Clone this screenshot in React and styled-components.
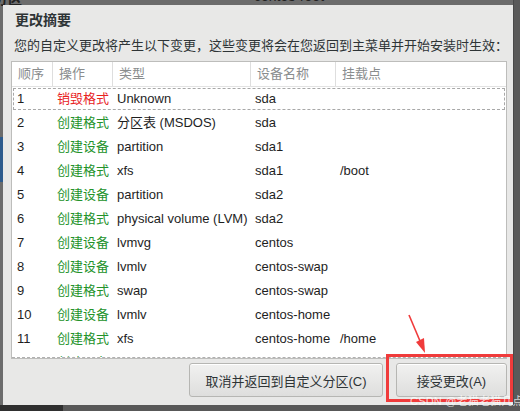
import React from 'react';
import styled, { createGlobalStyle } from 'styled-components';

const GlobalStyle = createGlobalStyle`
  html, body {
    margin: 0;
    padding: 0;
    background: #6c6c6c;
  }
  body {
    font-family: "Liberation Sans", "Noto Sans CJK SC", sans-serif;
  }
`;

const Desktop = styled.div`
  position: relative;
  width: 520px;
  height: 411px;
  overflow: hidden;
  background: #6c6c6c;
  box-sizing: border-box;
  padding: 5px 7px 0 3px;
`;

const BackText = styled.span`
  position: absolute;
  left: ${p => p.x}px;
  top: ${p => p.y}px;
  font-size: 14px;
  font-weight: ${p => (p.bold ? 700 : 400)};
  color: #222;
  white-space: nowrap;
`;

const SideAccent = styled.div`
  position: absolute;
  left: 0;
  top: 137px;
  width: 3px;
  height: 45px;
  background: #2d5b8d;
`;

const RightEdge = styled.div`
  position: absolute;
  right: 0;
  top: 0;
  width: 7px;
  height: 405px;
  background: #5a5a5a;
  border-left: 1px solid #4a4a4a;
  box-sizing: border-box;
`;

const BottomBar = styled.div`
  position: absolute;
  left: 0;
  bottom: 0;
  width: 100%;
  height: 6px;
  display: flex;
`;

const BarPart = styled.div`
  width: ${p => p.w};
  flex: ${p => (p.grow ? 1 : 'none')};
  background: ${p => p.color};
`;

const Dialog = styled.div`
  position: relative;
  width: 510px;
  height: 400px;
  box-sizing: border-box;
  background: #e8e8e7;
  padding: 6px 6px 8px 8px;
  display: flex;
  flex-direction: column;
  color: #2e3436;
`;

const Title = styled.div`
  font-size: 14px;
  font-weight: 700;
  line-height: 18px;
  padding-left: 4px;
`;

const Subtitle = styled.div`
  margin-top: 8px;
  font-size: 13px;
  line-height: 18px;
  padding-left: 3px;
  white-space: nowrap;
`;

const Table = styled.div`
  margin-top: 6px;
  height: 299px;
  background: #fff;
  border: 1px solid #bdbdbb;
  box-sizing: border-box;
  display: flex;
  flex-direction: column;
  overflow: hidden;
`;

const cols = '40px 60px 138px 85px 1fr';

const HeaderRow = styled.div`
  display: grid;
  grid-template-columns: ${cols};
  height: 24px;
  border-bottom: 1px solid #e2e2e2;
  flex: none;
`;

const HeaderCell = styled.div`
  font-size: 13px;
  line-height: 24px;
  color: #8a8d8e;
  padding-left: 6px;
  border-left: ${p => (p.first ? 'none' : '1px solid #dedede')};
`;

const Body = styled.div`
  flex: 1;
  overflow: hidden;
  border-bottom: 1px dashed #b0b0b0;
`;

const Row = styled.div`
  display: grid;
  grid-template-columns: ${cols};
  height: 24px;
  outline: ${p => (p.focused ? '1px dashed #a8a8a8' : 'none')};
  outline-offset: -2px;
`;

const Cell = styled.div`
  font-size: 13px;
  line-height: 24px;
  padding-left: 5px;
  white-space: nowrap;
  color: ${p => p.color || '#1e1e1e'};
`;

const Footer = styled.div`
  margin-top: 4px;
  display: flex;
  justify-content: flex-end;
  gap: 13px;
  padding-right: 0;
`;

const Button = styled.button`
  height: 34px;
  width: ${p => p.w}px;
  box-sizing: border-box;
  border: 1px solid #b6b6b3;
  border-radius: 3px;
  background: linear-gradient(#f1f1f0, #dededd);
  box-shadow: inset 0 1px #fff;
  font-family: "Liberation Sans", "Noto Sans CJK SC", sans-serif;
  font-size: 13px;
  color: #2e3436;
  padding: 0;
`;

const Highlight = styled.div`
  position: absolute;
  left: 383px;
  top: 349px;
  width: 127px;
  height: 48px;
  border: 3px solid #f03b3b;
  box-sizing: border-box;
  pointer-events: none;
`;

const Watermark = styled.span`
  position: absolute;
  left: 407px;
  top: 387px;
  font-size: 11px;
  color: rgba(255, 255, 255, 0.75);
  white-space: nowrap;
  letter-spacing: 0.2px;
`;

const Arrow = styled.svg`
  position: absolute;
  left: 400px;
  top: 310px;
  overflow: visible;
`;

const RED = '#e8231f';
const GREEN = '#23922a';

const rows = [
  ['1', '销毁格式', 'Unknown', 'sda', ''],
  ['2', '创建格式', '分区表 (MSDOS)', 'sda', ''],
  ['3', '创建设备', 'partition', 'sda1', ''],
  ['4', '创建格式', 'xfs', 'sda1', '/boot'],
  ['5', '创建设备', 'partition', 'sda2', ''],
  ['6', '创建格式', 'physical volume (LVM)', 'sda2', ''],
  ['7', '创建设备', 'lvmvg', 'centos', ''],
  ['8', '创建设备', 'lvmlv', 'centos-swap', ''],
  ['9', '创建格式', 'swap', 'centos-swap', ''],
  ['10', '创建设备', 'lvmlv', 'centos-home', ''],
  ['11', '创建格式', 'xfs', 'centos-home', '/home'],
  ['12', '创建设备', 'lvmlv', 'centos-root', ''],
];

const headers = ['顺序', '操作', '类型', '设备名称', '挂载点'];

export default function App() {
  return (
    <>
      <GlobalStyle />
      <Desktop>
        <BackText x={-6} y={-12} bold>分区</BackText>
        <BackText x={254} y={-12}>centos-root</BackText>
        <SideAccent />
        <RightEdge />
        <BottomBar>
          <BarPart w="63px" color="#2f2f2f" />
          <BarPart grow color="#585858" />
        </BottomBar>
        <Dialog>
          <Title>更改摘要</Title>
          <Subtitle>您的自定义更改将产生以下变更，这些变更将会在您返回到主菜单并开始安装时生效：</Subtitle>
          <Table>
            <HeaderRow>
              {headers.map((h, i) => (
                <HeaderCell key={h} first={i === 0}>{h}</HeaderCell>
              ))}
            </HeaderRow>
            <Body>
              {rows.map((r, i) => (
                <Row key={r[0]} focused={i === 0}>
                  <Cell>{r[0]}</Cell>
                  <Cell color={r[1] === '销毁格式' ? RED : GREEN}>{r[1]}</Cell>
                  <Cell>{r[2]}</Cell>
                  <Cell>{r[3]}</Cell>
                  <Cell>{r[4]}</Cell>
                </Row>
              ))}
            </Body>
          </Table>
          <Footer>
            <Button w={194}>取消并返回到自定义分区(C)</Button>
            <Button w={111}>接受更改(A)</Button>
          </Footer>
          <Highlight />
          <Watermark>CSDN @老猫老猫几点钟</Watermark>
          <Arrow width="30" height="45" viewBox="0 0 30 45">
            <path d="M6 0 L17 26" stroke="#f03b3b" strokeWidth="1.6" fill="none" />
            <path d="M13 27 L21 23 L22 38 Z" fill="#f03b3b" />
          </Arrow>
        </Dialog>
      </Desktop>
    </>
  );
}
